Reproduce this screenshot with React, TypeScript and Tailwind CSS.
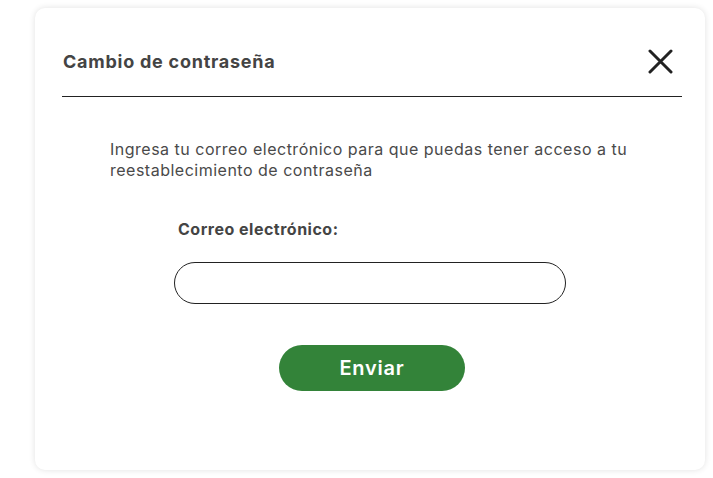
import React from "react";

export default function App() {
  return (
    <div
      className="w-[713px] h-[478px] bg-white pt-[8px] pl-[35px] overflow-hidden"
      style={{ fontFamily: "Inter, 'Open Sans', sans-serif" }}
    >
      <div className="w-[670px] h-[462px] rounded-[10px] bg-white shadow-[0_0_6px_rgba(0,0,0,0.12)] pl-[27px] pr-[23px] pt-[33px] flex flex-col">
        <div className="h-[40px] flex items-center justify-between">
          <h1 className="pl-[1px] text-[18px] tracking-[0.75px] font-bold text-[#444444]">Cambio de contraseña</h1>
          <button className="mr-[9px] w-[25px] h-[25px] flex items-center justify-center" aria-label="Cerrar">
            <svg width="25" height="25" viewBox="0 0 25 25" fill="none">
              <path d="M2 2 L23 23 M23 2 L2 23" stroke="#222222" strokeWidth="3" strokeLinecap="round" />
            </svg>
          </button>
        </div>
        <div className="mt-[15px] h-px bg-[#222222]" />
        <div className="flex flex-col items-center">
          <p className="mt-[42px] mr-[4px] w-[524px] pl-[2px] text-[16px] tracking-[0.5px] leading-[21px] text-[#4a4a4a]">
            Ingresa tu correo electrónico para que puedas tener acceso a tu reestablecimiento de contraseña
          </p>
          <div className="mt-[36px] mr-[4px] w-[392px] flex flex-col">
            <label className="pl-[4px] text-[16px] tracking-[0.5px] font-bold text-[#444444]">Correo electrónico:</label>
            <input
              type="email"
              className="mt-[21px] w-[392px] h-[42px] rounded-full border border-[#222222] outline-none px-4"
            />
          </div>
          <button className="mt-[41px] w-[186px] h-[46px] rounded-full bg-[#338339] text-white text-[20px] tracking-[0.8px] font-semibold">
            Enviar
          </button>
        </div>
      </div>
    </div>
  );
}
